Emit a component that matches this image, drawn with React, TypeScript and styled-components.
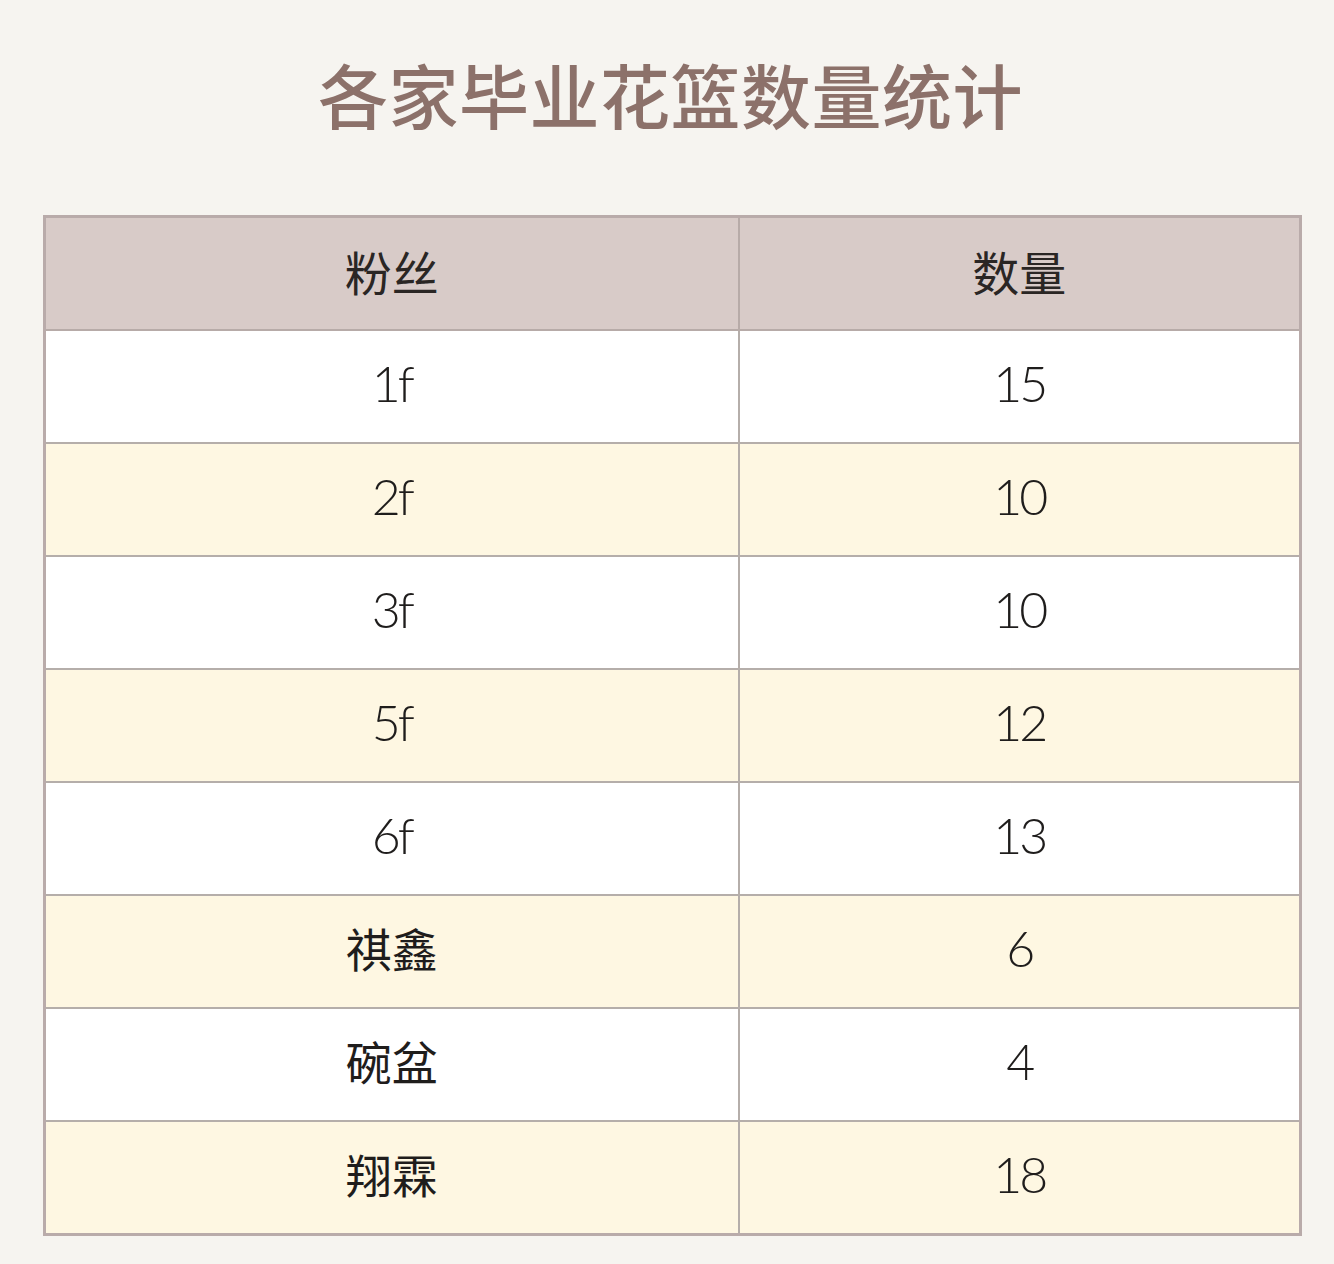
import React from "react";
import styled, { createGlobalStyle } from "styled-components";

const GlobalStyle = createGlobalStyle`
  html, body {
    margin: 0;
    padding: 0;
    background: #f6f4f0;
  }
  body {
    font-family: "Noto Sans CJK SC", "Noto Sans", sans-serif;
  }
`;

const Page = styled.div`
  width: 1334px;
  min-height: 1264px;
  background: #f6f4f0;
  display: flex;
  flex-direction: column;
  align-items: stretch;
  padding: 0 32px 0 43px;
  box-sizing: border-box;
`;

const Title = styled.h1`
  margin: 47px 0 0 0;
  height: 119px;
  text-align: center;
  font-family: "Noto Sans CJK SC", sans-serif;
  font-weight: 500;
  font-size: 70px;
  line-height: 94px;
  letter-spacing: 0.5px;
  color: #8c716a;
  padding-right: 4px;
`;

const Table = styled.table`
  width: 1259px;
  border-collapse: collapse;
  border: 3px solid #b9abaa;
  table-layout: fixed;
  margin-top: 49px;
`;

const HeadCell = styled.th`
  height: 104px;
  padding: 0 0 7px 0;
  background: #d8cbc8;
  border: 2px solid #b7aba8;
  font-family: "Noto Sans CJK SC", sans-serif;
  font-weight: 400;
  font-size: 47px;
  color: #2a2624;
  text-align: center;
  vertical-align: middle;
`;

const Row = styled.tr<{ $alt: boolean }>`
  background: ${(p) => (p.$alt ? "#fef7e2" : "#ffffff")};
`;

const Cell = styled.td<{ $latin: boolean }>`
  height: ${(p) => (p.$latin ? "104px" : "102px")};
  padding: 0 0 ${(p) => (p.$latin ? "7px" : "9px")} 0;
  border: 2px solid #b5aeaa;
  text-align: center;
  vertical-align: middle;
  color: #1f1d1c;
  font-family: ${(p) =>
    p.$latin ? "Lato, 'Noto Sans', sans-serif" : "'Noto Sans CJK SC', sans-serif"};
  font-size: ${(p) => (p.$latin ? "50px" : "46px")};
  font-weight: ${(p) => (p.$latin ? 300 : 400)};
  letter-spacing: ${(p) => (p.$latin ? "-3px" : "0")};
`;

const rows: [string, string][] = [
  ["1f", "15"],
  ["2f", "10"],
  ["3f", "10"],
  ["5f", "12"],
  ["6f", "13"],
  ["祺鑫", "6"],
  ["碗盆", "4"],
  ["翔霖", "18"],
];

const isLatin = (s: string) => /^[0-9a-zA-Z]+$/.test(s);

export default function App() {
  return (
    <>
      <GlobalStyle />
      <Page>
        <Title>各家毕业花篮数量统计</Title>
        <Table>
          <colgroup>
            <col style={{ width: "694px" }} />
            <col />
          </colgroup>
          <thead>
            <tr>
              <HeadCell>粉丝</HeadCell>
              <HeadCell>数量</HeadCell>
            </tr>
          </thead>
          <tbody>
            {rows.map(([name, count], i) => (
              <Row key={name} $alt={i % 2 === 1}>
                <Cell $latin={isLatin(name)}>{name}</Cell>
                <Cell $latin={true}>{count}</Cell>
              </Row>
            ))}
          </tbody>
        </Table>
      </Page>
    </>
  );
}
